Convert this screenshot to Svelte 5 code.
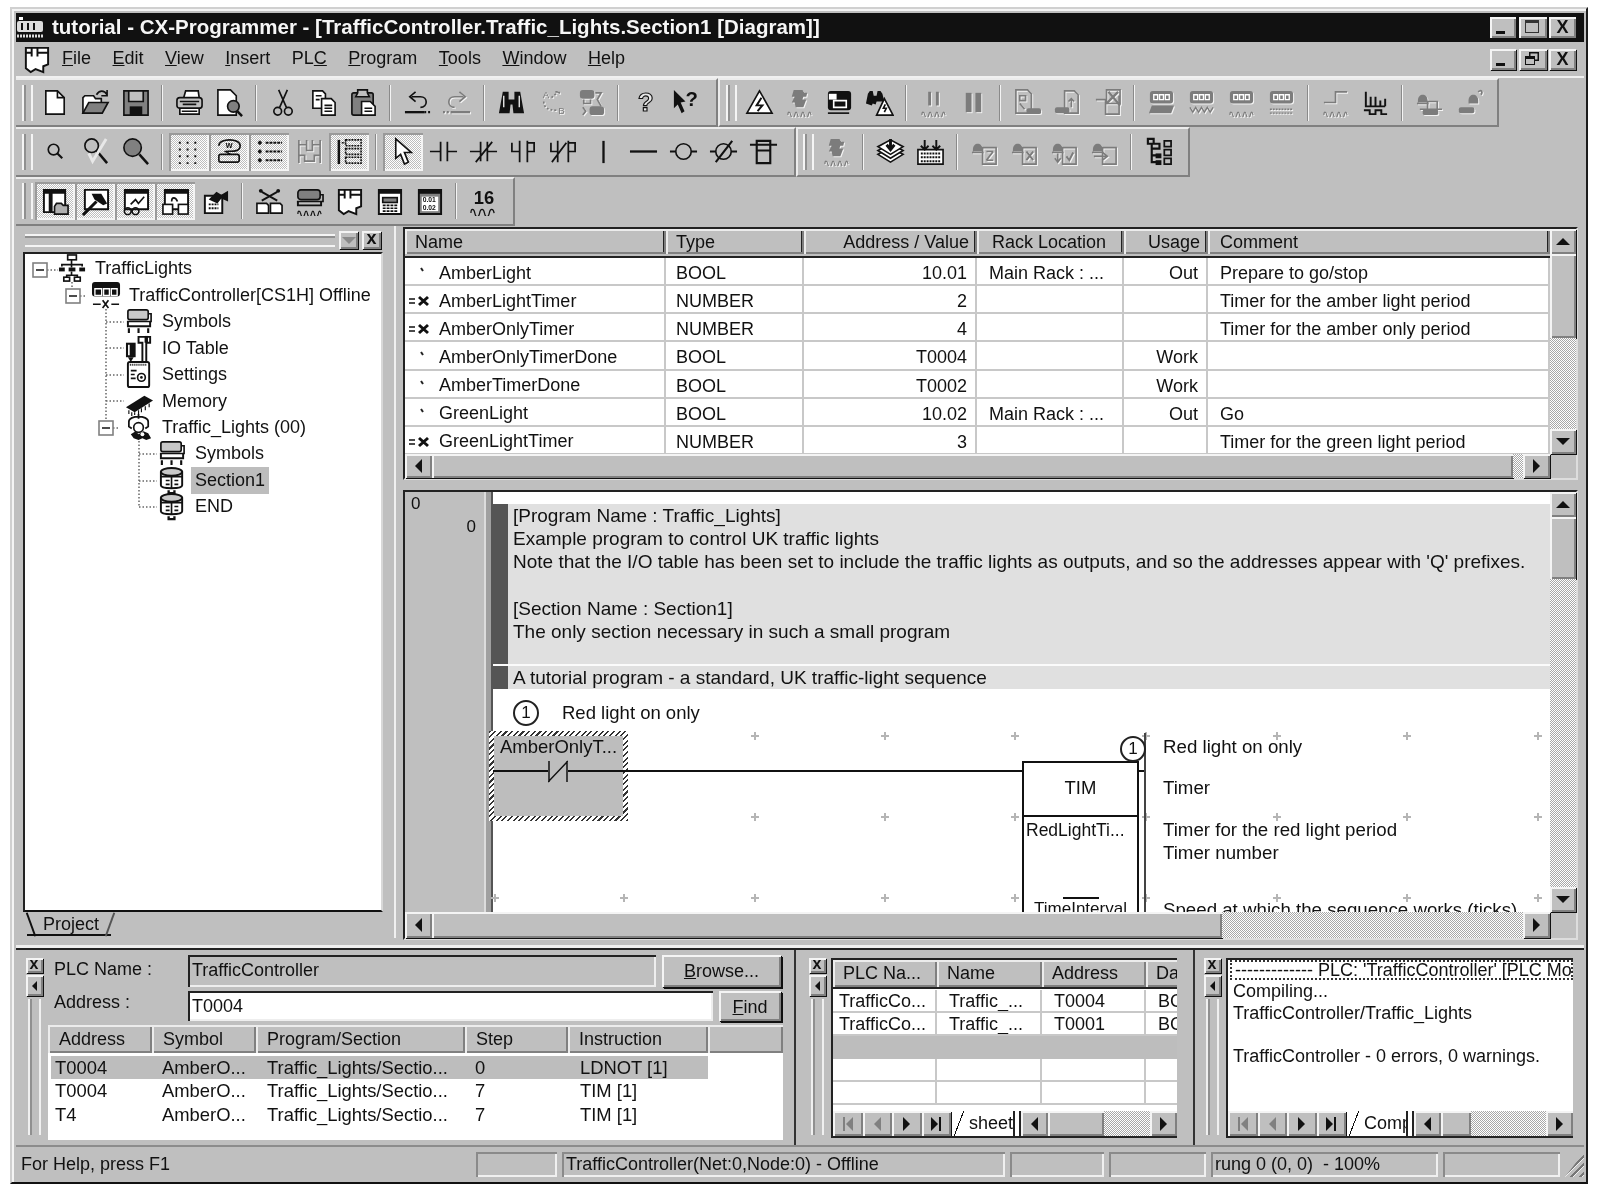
<script>
  // shorthand attributes for the toolbar glyphs
  const W = 'style="fill:var(--w,#fff)"';
  const D = 'fill="currentColor" stroke="none"';
  const G = 'style="fill:var(--g,#808080)"';
  const feet = '<path stroke-width="1.2" d="M3 28c0-4 2-4 3 0s3 4 4 0 2-4 3 0 3 4 4 0 2-4 3 0 3 4 4 0 2-4 3 0"/>';
  const plcTop = `<rect x="3" y="3" width="24" height="13" rx="3" ${D}/><path stroke="#fff" stroke-width="1.4" d="M7 7h4v5H7zM13 7h4v5h-4zM19 7h4v5h-4z"/>`;
  const bell = `<path ${D} d="M3 13c0-8 10-8 10 0v2H3z"/><path d="M2 16h12"/>`;
  const label = (t, x, y, s = 9, w = 700) =>
    `<text x="${x}" y="${y}" font-family="Liberation Sans" font-size="${s}" font-weight="${w}" fill="currentColor" stroke="none">${t}</text>`;

  const icons = {
    new: `<path d="M5 3h12l7 7v17H5z" ${W}/><path d="M17 3v7h7"/>`,
    open: `<path d="M2 26V10l2-2h9l2 3h6v4" ${W}/><path d="M2 26l6-11h20l-6 11z" ${G}/><path d="M16 7c3-5 8-5 11 0M27 2v6h-6"/>`,
    save: `<path d="M3 3h25v25H3z" ${G}/><path d="M8 3h15v11H8z" style="fill:var(--w,#c0c0c0)"/><rect x="9" y="19" width="13" height="9" ${D}/>`,
    print: `<path d="M9 10l2-7h13l1 7" ${W}/><rect x="2" y="10" width="26" height="11" rx="3" style="fill:var(--w,#c0c0c0)"/><path d="M5 21h20v6H5z" ${W}/><path d="M5 14h20M8 17h14M7 24h16"/>`,
    preview: `<path d="M3 2h13l6 6v20H3z" ${W}/><circle cx="19" cy="19" r="6" ${G}/><path stroke-width="2.6" d="M23 24l5 5"/>`,
    cut: `<circle cx="9" cy="24" r="4"/><circle cx="20" cy="24" r="4"/><path d="M11 20L19 2M18 20L10 2"/>`,
    copy: `<path d="M4 3h10l3 3v15H4z" ${W}/><path d="M13 11h10l4 4v13H13z" ${W}/><path d="M7 8h6M7 12h4M16 18h8M16 21h8M16 24h8"/>`,
    paste: `<rect x="3" y="5" width="22" height="23" rx="2" ${G}/><path d="M9 5V2h10v3l2 4H7z" style="fill:var(--w,#c0c0c0)"/><path d="M13 14h9l5 5v9H13z" ${W}/><path d="M16 21h8M16 24h8"/>`,
    undo: `<path d="M9 9h9c8 0 8 11 0 11M13 4L7 9l6 5"/><path stroke-width="2.4" d="M2 25h20"/><path stroke-width="2.4" stroke-dasharray="2 2" d="M22 25h8"/>`,
    redo: `<path d="M21 9h-9c-8 0-8 11 0 11M17 4l6 5-6 5"/><path stroke-width="2.4" d="M8 25h20"/><path stroke-width="2.4" stroke-dasharray="2 2" d="M0 25h8"/>`,
    binoc: `<path ${D} d="M6 4h6v8h6V4h6l4 22H17l-1-9h-2l-1 9H2z"/><path stroke="#fff" stroke-width="1.3" d="M7 8v12M23 8v12"/>`,
    ab: `${label('A', 6, 10, 10, 400)}${label('B', 22, 27, 10, 400)}<path stroke-dasharray="2 2" d="M7 14c0 6 4 9 13 9M15 10l7-6M19 4h4v4"/>`,
    replace: `<rect x="3" y="2" width="15" height="9" rx="3" ${D}/><path d="M7 12v4h7v-4M19 5h6l-4 7 4 7M6 20l3 4-3 4"/><rect x="13" y="19" width="15" height="9" rx="3" ${D}/>`,
    help: `<text x="7" y="24" font-family="Liberation Sans" font-size="27" font-weight="700" fill="#e8e8e8" stroke="currentColor" stroke-width="1.2">?</text>`,
    whats: `<path ${D} d="M3 2l12 12-5 1 4 9-3 2-4-9-4 4z"/>${label('?', 15, 19, 21, 700)}`,
    warn: `<path d="M15 3L2 26h26z" ${W}/><path stroke-width="2" d="M17 10l-5 8h6l-5 6"/>`,
    compile: `<path ${D} d="M9 2h9l2 3h3l-1 4h-3l-1 3h4l-3 8h-8l-1-5H7l3-6H7z"/>${feet}`,
    online: `<rect x="3" y="3" width="24" height="20" rx="3" ${D}/><path d="M9 13h13v7H9z" stroke="#fff"/><rect x="4" y="6" width="8" height="6" fill="#fff" stroke="none"/><path d="M3 26h22"/>`,
    binwarn: `<path ${D} d="M1 16l2-10 2-3h3l1 5h3l1-5h3l2 3 2 8h-8l-1 3-3-1-1 2z"/><path d="M20 11l-8 17h17z" ${W}/><path d="M21 17l-2 4h3l-2 4"/>`,
    pause1: `<path stroke-width="3" d="M11 4v14M19 4v14"/>${feet}`,
    pause: `<rect x="7" y="5" width="6" height="20" ${D}/><rect x="17" y="5" width="6" height="20" ${D}/>`,
    doc1: `<path d="M3 2h12l4 4v20H3z"/><path d="M7 8h6v5H7zM7 16l5 6"/><rect x="14" y="21" width="15" height="6" rx="2" ${D}/>`,
    doc2: `<path d="M12 3h10l4 4v19H12z"/><path d="M19 20v-9M16 14l3-3 3 3"/><rect x="2" y="20" width="15" height="6" rx="2" ${D}/>`,
    doc3: `<path d="M3 12h10v15h14V8"/><path d="M14 2h14v14H14z"/><path stroke-width="2.4" d="M16 4l12 14M26 4L14 16"/>`,
    plc1: `${plcTop}<path ${D} d="M5 18h23l-3 8H2z"/>`,
    plc2: `${plcTop}<path stroke-width="1.4" d="M3 20l3 5 3-5 3 5 3-5 3 5 3-5 3 5 3-5"/>`,
    plc3: `${plcTop}${feet}`,
    plc4: `${plcTop}<path stroke-width="1.4" stroke-dasharray="2 1" d="M3 22h24M3 26h24"/>`,
    step: `<path d="M3 15h12V4h12"/>${feet}`,
    wave: `<path stroke-width="2" d="M5 4v15h20M10 9v10M15 9v10M20 13v6M25 11v8"/><path stroke-width="2" d="M3 23h6v4h6v-4h6v4h6"/>`,
    mem1: `${bell}<path d="M13 14h10v8H13zM5 22h23"/><rect x="8" y="22" width="16" height="6" rx="2" ${D}/>`,
    mem2: `<path ${D} d="M14 13c0-8 10-8 10 0v3H14z"/><path d="M24 4c3-3 5 0 3 3"/><rect x="4" y="20" width="16" height="6" rx="2" ${D}/>`,
    zs: `<circle cx="13" cy="13" r="5.5"/><path stroke-width="2.2" d="M17 17l5 5"/>`,
    zx: `<circle cx="11" cy="9" r="7"/><path stroke-width="2.6" d="M16 14l11 13"/><path stroke="#e8e8e8" stroke-width="3" d="M8 17l4 8 14-23"/>`,
    zl: `<circle cx="12" cy="11" r="9" ${G}/><path stroke-width="2.6" d="M19 18l9 10"/>`,
    dots: `<path stroke-width="2" stroke-dasharray="2 6" d="M4 6h24M4 13h24M4 20h24M4 27h24"/>`,
    bubble: `<path d="M4 9c0-8 22-8 22 0s-12 5-15 6l5 3"/><rect x="4" y="18" width="21" height="8" rx="2"/>${label('w', 11, 11, 9)}`,
    list: `<path stroke-width="2" d="M5 4v4M3 6h4M5 13v4M3 15h4M5 22v4M3 24h4"/><path stroke-dasharray="3 1" stroke-width="2" d="M11 6h17M11 15h17M11 24h17"/>`,
    rungs: `<path d="M4 3v24M26 3v24M4 8h8v6h6V8h8M4 19h6v6h10v-6h6M12 3v5M18 3v5"/>`,
    rungs2: `<path stroke-width="2.6" d="M4 3v25"/><path d="M7 6h4M11 3h16v6H11zM11 12h16v6H11zM11 21h16v6H11z" stroke-dasharray="2 1"/>`,
    arrow: `<path d="M7 2v20l5-4 4 10 4-2-4-10h7z" ${W}/>`,
    no: `<path stroke-width="1.8" d="M1 15h11M12 5v20M19 5v20M19 15h10"/>`,
    nc: `<path stroke-width="1.8" d="M1 15h11M12 5v20M19 5v20M19 15h10M7 26L24 5"/>`,
    po: `<path stroke-width="1.8" d="M3 6v9h8M11 4v22M19 4v22M19 6h7v9h-7"/>`,
    pc: `<path stroke-width="1.8" d="M2 6v9h7M9 4v22M20 4v22M20 6h7v9h-7M3 26L18 6"/>`,
    vline: `<path stroke-width="2.4" d="M15 4v23"/>`,
    hline: `<path stroke-width="2.4" d="M1 15h28"/>`,
    coil: `<circle cx="15" cy="15" r="8"/><path stroke-width="2.2" d="M1 15h6M23 15h6"/>`,
    coiln: `<circle cx="15" cy="15" r="8"/><path stroke-width="2.2" d="M1 15h6M23 15h6M7 26L24 4"/>`,
    inst: `<path stroke-width="2.2" d="M8 4h14v23H8zM8 14h14M1 8h28"/>`,
    stack: `<path ${W} d="M15 11l13 7-13 8-13-8z"/><path ${W} d="M15 7l13 7-13 8-13-8z"/><path ${W} d="M15 3l13 7-13 8-13-8z"/><path stroke-width="3" d="M15 2v9M11 8l4 5 4-5"/>`,
    grid: `<path ${W} d="M2 13h26v15H2z"/><path stroke-dasharray="2 1" stroke-width="2" d="M5 17h20M5 21h20M5 25h20"/><path stroke-width="2" d="M9 3v9M5 9l4 4 4-4M21 3v9M17 9l4 4 4-4"/>`,
    sec1: `${bell}<path d="M13 11h14v17H13z"/><path d="M17 24l7-9M17 15h7M17 24h7"/>`,
    sec2: `${bell}<path d="M13 11h14v17H13z"/><path stroke-width="2" d="M17 15l7 9M24 15l-7 9"/>`,
    sec3: `${bell}<path d="M13 11h14v17H13zM8 17v8M5 22l3 4 3-4"/><path stroke-width="2" d="M17 20l3 4 4-8"/>`,
    sec4: `${bell}<path d="M13 11h14v17H13zM4 20h13M13 16l5 4-5 4"/>`,
    tree: `<path stroke-width="2.2" d="M4 2h6v5H4zM8 7h8v5H8zM8 12v14h8M8 19h8M16 12v-2"/><rect x="12" y="17" width="6" height="5" ${D}/><rect x="12" y="24" width="6" height="5" ${D}/><path stroke-width="1.8" d="M21 4h7v6h-7zM21 13h7v6h-7zM21 22h7v6h-7z"/>`,
    win1: `<path stroke-width="2" d="M3 3h22v23H3z" ${W}/><path stroke-width="4" d="M3 5h22M10 7v19"/><path d="M14 20l2-3h5l2 2h5v9H14z" style="fill:#b0b0b0"/>`,
    hammer: `<path stroke-width="2" d="M4 3h24v20H4z" ${W}/><path stroke-width="3.2" d="M2 29l14-14"/><path ${D} d="M11 7l10 0 6 10-4 2-9-6z"/>`,
    chart: `<path stroke-width="2" d="M4 3h24v20H4z" ${W}/><path stroke-width="4" d="M4 5h24"/><path d="M10 18l5-5 3 4 6-7"/><circle cx="7" cy="25" r="3.5"/><circle cx="15" cy="25" r="3.5"/>`,
    flow: `<path stroke-width="2" d="M4 3h24v20H4z" ${W}/><path stroke-width="4" d="M4 5h24"/><path d="M11 15c0-5 4-5 6 0"/><rect x="2" y="18" width="10" height="10" ${W}/><rect x="18" y="18" width="10" height="10" ${W}/>`,
    form: `<path stroke-width="2" d="M4 9h18v18H4z" ${W}/><path stroke-dasharray="2 1" stroke-width="2" d="M8 18h10M8 22h10"/><path ${D} d="M8 13l8-8 5 3 7-4v11l-7-3-4 5z"/>`,
    cross: `<path ${W} d="M2 17h10l2 2v8H2z"/><path ${W} d="M16 17h10l2 2v8H16z"/><path stroke-width="2" d="M7 5l16 9M23 5L7 14"/><circle cx="6" cy="4" r="2" ${D}/><circle cx="24" cy="4" r="2" ${D}/>`,
    syms: `<rect x="3" y="3" width="23" height="10" rx="3" ${G}/><path d="M26 8h3v7H2M16 15h-2"/><path stroke-width="2" d="M3 15v4h24v-4"/>${feet}`,
    cx: `<path stroke-width="2" d="M4 3h23v17l-5 2v6l-8-3-5 3-5-4z" ${W}/><path stroke-width="2" d="M10 3v9M10 8H4M16 3v9M16 8h11"/>`,
    form2: `<path stroke-width="2" d="M4 3h23v25H4z" ${W}/><path stroke-width="4" d="M4 5h23"/><rect x="8" y="11" width="15" height="5" ${G}/><path stroke-dasharray="3 1" d="M8 19h15M8 22h15M8 25h15"/>`,
    table: `<path stroke-width="2" d="M4 3h23v25H4z" ${G}/><path stroke-width="4" d="M4 5h23"/><rect x="7" y="10" width="17" height="15" fill="#fff" stroke="none"/>${label('0.01', 8, 16, 7)}${label('0.02', 8, 24, 7)}`,
    sixteen: `${label('16', 5, 18, 19)}<path stroke-width="1.3" d="M2 27c0-5 3-5 4 0s4 5 5 0 4-5 5 0 4 5 5 0 4-5 5 0"/>`,
    // tree glyphs
    net: `<rect x="10" y="1" width="9" height="5" ${W}/><path d="M14 6v5M4 13v-2h21v2M14 11v3"/><rect x="1" y="14" width="6" height="4" ${D}/><rect x="11" y="14" width="7" height="4" ${D}/><rect x="22" y="14" width="6" height="4" ${D}/><path d="M14 18v4M9 24v-2h11v2"/><rect x="6" y="24" width="6" height="4" ${W}/><rect x="17" y="24" width="6" height="4" ${W}/>`,
    plc: `<rect x="0" y="1" width="29" height="15" rx="3" ${D}/><path stroke="#fff" stroke-width="1.4" d="M3 8h7v7H3zM12 8h6v7h-6zM20 8h6v7h-6z"/><path d="M1 24h8M20 24h8M11 20l6 8M17 20l-6 8"/>`,
    syms2: `<rect x="3" y="3" width="21" height="10" rx="2" fill="#c8c8c8"/><path d="M24 7h3v8H2M12 15h-1"/><path stroke-width="2" d="M3 15v5h23v-5"/><path stroke-width="2.2" d="M4 22v5M14 22v5M24 22v5"/>`,
    io: `<rect x="1" y="9" width="10" height="15" ${D}/><path stroke="#fff" d="M4 11v11"/><path ${D} d="M3 24h6l-3 5z"/><path stroke-width="2" d="M14 3h12v6h-4v20h-4V9h-4z" ${W}/><path stroke-width="3.5" d="M22 2v7"/>`,
    cfg: `<rect x="3" y="2" width="22" height="26" rx="2" stroke-width="2" ${W}/><path stroke-dasharray="1 1" stroke-width="2" d="M5 5h18"/><path d="M6 11h6M6 15h4M6 19h5"/><circle cx="17" cy="18" r="4"/><circle cx="17" cy="18" r="1.4" ${D}/>`,
    mem: `<path ${D} d="M1 21L20 9l9 5-19 12z"/><path stroke-width="1.2" d="M4 24v4M7 26v4M10 26v3M14 24v4M17 22v4M21 20v4M25 17v4"/>`,
    prog: `<path stroke-width="1.8" d="M4 9c0-7 20-7 20 0M4 9v5l3 2M24 9v5l-3 2M14 1v5"/><circle cx="14" cy="15" r="5"/><path ${D} d="M6 22l5-3 3 3 5-3 5 2 3 5-5 2-4-2-4 2-5-2z"/><circle cx="18" cy="22" r="2" fill="#fff" stroke="none"/>`,
    sect: `<ellipse cx="14" cy="6" rx="11" ry="4" stroke-width="2" fill="#c8c8c8"/><path stroke-width="2" d="M3 6v14c0 4 22 4 22 0V6"/><path d="M3 11h22M14 11v12M8 15h4M17 15h4M8 19h4M17 19h4"/><path stroke-width="2.4" d="M11 25v3h6v-3"/>`
  };

  // toolbar layouts: | = separator, ~ = disabled, ! = latched down
  const bars = [
    [
      ['new open save | print preview | cut copy paste | undo ~redo | binoc ~ab ~replace | help whats', 'w1'],
      ['warn ~compile online binwarn | ~pause1 ~pause | ~doc1 ~doc2 ~doc3 | ~plc1 ~plc2 ~plc3 ~plc4 | ~step wave | ~mem1 ~mem2', 'w2']
    ],
    [
      ['zs zx zl | !dots !bubble !list ~rungs !rungs2 | !arrow no nc po pc vline hline coil coiln inst', 'w3'],
      ['~compile | stack grid | ~sec1 ~sec2 ~sec3 ~sec4 | tree', 'w4']
    ],
    [['!win1 !hammer !chart !flow form | cross syms cx form2 table | sixteen', 'w5']]
  ];

  const parse = (s) =>
    s.split(' ').map((t) => ({
      sep: t === '|',
      off: t[0] === '~',
      on: t[0] === '!',
      name: t.replace(/[~!]/, '')
    }));

  const menus = [['F', 'ile'], ['E', 'dit'], ['V', 'iew'], ['I', 'nsert'], ['PL', 'C', 1], ['P', 'rogram'], ['T', 'ools'], ['W', 'indow'], ['H', 'elp']];

  const tree = [
    [0, 'net', 'TrafficLights'],
    [1, 'plc', 'TrafficController[CS1H] Offline'],
    [2, 'syms2', 'Symbols'],
    [2, 'io', 'IO Table'],
    [2, 'cfg', 'Settings'],
    [2, 'mem', 'Memory'],
    [2, 'prog', 'Traffic_Lights (00)'],
    [3, 'syms2', 'Symbols'],
    [3, 'sect', 'Section1', true],
    [3, 'sect', 'END']
  ];
  const indent = [33, 67, 100, 133];

  const symbols = [
    ['b', 'AmberLight', 'BOOL', '10.01', 'Main Rack : ...', 'Out', 'Prepare to go/stop'],
    ['n', 'AmberLightTimer', 'NUMBER', '2', '', '', 'Timer for the amber light period'],
    ['n', 'AmberOnlyTimer', 'NUMBER', '4', '', '', 'Timer for the amber only period'],
    ['b', 'AmberOnlyTimerDone', 'BOOL', 'T0004', '', 'Work', ''],
    ['b', 'AmberTimerDone', 'BOOL', 'T0002', '', 'Work', ''],
    ['b', 'GreenLight', 'BOOL', '10.02', 'Main Rack : ...', 'Out', 'Go'],
    ['n', 'GreenLightTimer', 'NUMBER', '3', '', '', 'Timer for the green light period']
  ];

  const notes = [
    '[Program Name : Traffic_Lights]',
    'Example program to control UK traffic lights',
    "Note that the I/O table has been set to include the traffic lights as outputs, and so the addresses appear with 'Q' prefixes.",
    '',
    '[Section Name : Section1]',
    'The only section necessary in such a small program'
  ];

  // diagram coordinates, relative to the rung canvas
  const OX = 493, OY = 689;
  const marks = [];
  for (const y of [736, 817, 898]) {
    for (const x of [755, 885, 1015, 1146, 1277, 1407, 1538]) marks.push([x - OX, y - OY]);
  }
  marks.push([2, 898 - OY], [624 - OX, 898 - OY]);

  const notesRight = [
    ['Red light on only', 747],
    ['Timer', 788],
    ['Timer for the red light period', 830],
    ['Timer number', 853],
    ['Speed at which the sequence works (ticks)', 910]
  ];

  const finds = [
    ['T0004', 'AmberO...', 'Traffic_Lights/Sectio...', '0', 'LDNOT [1]'],
    ['T0004', 'AmberO...', 'Traffic_Lights/Sectio...', '7', 'TIM [1]'],
    ['T4', 'AmberO...', 'Traffic_Lights/Sectio...', '7', 'TIM [1]']
  ];
  const watch = [
    ['TrafficCo...', 'Traffic_...', 'T0004', 'BC'],
    ['TrafficCo...', 'Traffic_...', 'T0001', 'BC'],
    ['', '', '', ''],
    ['', '', '', ''],
    ['', '', '', '']
  ];
</script>

{#snippet glyph(name, cls = '')}
  <svg class="ic {cls}" viewBox="0 0 30 30" fill="none" stroke="currentColor" stroke-width="1.7">{@html icons[name]}</svg>
{/snippet}

{#snippet dock()}
  <div class="dock">
    <div class="dockx raised">x</div>
    <div class="dockl raised"><i class="arr l"></i></div>
    <div class="dockgrip"></div>
  </div>
{/snippet}

{#snippet sheetbar(tab, tabW, thumbW)}
  <div class="sheetbar">
    <div class="nav">
      <div class="navb raised off"><b class="stop"></b><i class="arr l"></i></div>
      <div class="navb raised off"><i class="arr l"></i></div>
      <div class="navb raised"><i class="arr r"></i></div>
      <div class="navb raised"><i class="arr r"></i><b class="stop"></b></div>
    </div>
    <div class="tab" style="width:{tabW}px">{tab}</div>
    <div class="hscroll">
      <div class="sb raised"><i class="arr l"></i></div>
      <div class="thumb raised" style="width:{thumbW}px"></div>
      <div class="dither"></div>
      <div class="sb raised"><i class="arr r"></i></div>
    </div>
  </div>
{/snippet}

<div class="win">
  <div class="title">
    <svg class="ticon" viewBox="0 0 30 26">
      <rect x="3" y="2" width="4" height="3" fill="#fff" />
      <rect x="1" y="6" width="26" height="11" rx="2" fill="#ddd" />
      <path d="M6 8v7M12 8v7M18 8v7" stroke="#111" stroke-width="2" />
      <path d="M1 21h27" stroke="#ddd" stroke-width="3" stroke-dasharray="2 1" />
    </svg>
    <span class="ttext">tutorial - CX-Programmer - [TrafficController.Traffic_Lights.Section1 [Diagram]]</span>
    <div class="capbtns">
      <div class="cap raised"><b class="u"></b></div>
      <div class="cap raised mid"><b class="m"></b></div>
      <div class="cap raised x">X</div>
    </div>
  </div>

  <div class="menu">
    <div class="mlogo">{@render glyph('cx')}</div>
    {#each menus as [a, b, flip]}
      <span class="mi">{#if flip}{a}<u>{b}</u>{:else}<u>{a}</u>{b}{/if}</span>
    {/each}
    <div class="capbtns">
      <div class="cap raised"><b class="u"></b></div>
      <div class="cap raised mid"><b class="r"></b></div>
      <div class="cap raised x">X</div>
    </div>
  </div>

  <div class="bars">
    {#each bars as row}
      <div class="barrow">
        {#each row as [spec, width]}
          <div class="band {width}">
            <div class="grip"></div>
            {#each parse(spec) as t}
              {#if t.sep}
                <div class="bsep"></div>
              {:else}
                <div class="tb" class:on={t.on}>{@render glyph(t.name, t.off ? 'off' : '')}</div>
              {/if}
            {/each}
          </div>
        {/each}
      </div>
    {/each}
  </div>

  <div class="work">
    <div class="left">
      <div class="lhead">
        <div class="lgrip"></div>
        <div class="lbtn raised"><i class="arr d pale"></i></div>
        <div class="lbtn raised bx">x</div>
      </div>
      <div class="treebox">
        <svg class="links" viewBox="0 0 356 300" width="356" height="300">
          <path d="M22 16h11M47 28v7M55 42h7M81 55v113M81 68h18M81 94h18M81 121h18M81 147h18M88 174h7M114 187v66M114 200h18M114 227h18M114 253h18" fill="none" stroke="#666" stroke-width="1.5" stroke-dasharray="1.5 2" />
          {#each [[15, 16], [48, 42], [81, 174]] as [x, y]}
            <rect x={x - 7} y={y - 7} width="14" height="14" fill="#fff" stroke="#808080" stroke-width="1.6" />
            <path d="M{x - 4} {y}h8" stroke="#111" stroke-width="1.5" />
          {/each}
        </svg>
        {#each tree as [depth, icon, text, sel]}
          <div class="tnode" style="margin-left:{indent[depth]}px">
            {@render glyph(icon)}
            <span class="tlabel" class:sel>{text}</span>
          </div>
        {/each}
      </div>
      <div class="ltabs">
        <div class="ptab">Project</div>
      </div>
    </div>

    <div class="vsplit"></div>

    <div class="right">
      <div class="sym">
        <div class="symbody">
          <div class="cols head">
            <div>Name</div>
            <div>Type</div>
            <div class="ra">Address / Value</div>
            <div class="rack">Rack Location</div>
            <div class="ra">Usage</div>
            <div class="cmt">Comment</div>
          </div>
          {#each symbols as row}
            <div class="cols srow">
              <div class="sname">
                <span class="kind">
                  {#if row[0] === 'n'}
                    <svg width="25" height="12" viewBox="0 0 25 12"><path d="M1 4h6M1 8h6" stroke="#111" stroke-width="1.6" /><path d="M11 2l9 8M20 2l-9 8" stroke="#111" stroke-width="3" /></svg>
                  {:else}
                    <svg width="25" height="12" viewBox="0 0 25 12"><path d="M13 1l2 3" stroke="#222" stroke-width="2" /></svg>
                  {/if}
                </span>{row[1]}
              </div>
              <div>{row[2]}</div>
              <div class="ra">{row[3]}</div>
              <div class="rackv">{row[4]}</div>
              <div class="ra">{row[5]}</div>
              <div class="cmt">{row[6]}</div>
            </div>
          {/each}
        </div>
        <div class="vscroll">
          <div class="sbv raised"><i class="arr u"></i></div>
          <div class="thumbv raised t1"></div>
          <div class="dither"></div>
          <div class="sbv raised"><i class="arr d"></i></div>
        </div>
        <div class="hscroll">
          <div class="sb raised"><i class="arr l"></i></div>
          <div class="thumb raised wide1"></div>
          <div class="dither"></div>
          <div class="sb raised"><i class="arr r"></i></div>
        </div>
        <div></div>
      </div>

      <div class="prog">
        <div class="canvas">
          <div class="rail">
            <span class="step0">0</span>
            <span class="step1">0</span>
          </div>
          <div class="stripe"></div>
          <div class="sheet">
            <div class="note">
              <div class="notebar"></div>
              <div class="notetext">
                {#each notes as n}
                  <div class="nline">{n}</div>
                {/each}
              </div>
            </div>
            <div class="note last">
              <div class="notebar"></div>
              <div class="notetext"><div class="nline">A tutorial program - a standard, UK traffic-light sequence</div></div>
            </div>
            <div class="rung">
              {#each marks as [x, y]}
                <span class="mark" style="left:{x - 4}px;top:{y - 4}px"></span>
              {/each}
              <div class="no n1">1</div>
              <div class="rcomment">Red light on only</div>

              <div class="cell">
                <div class="celltext">AmberOnlyT...</div>
              </div>
              <div class="wire"></div>
              <svg class="contact" width="20" height="23" viewBox="0 0 20 23">
                <path d="M1 1v21M19 1v21M0 22L20 1" stroke="#111" stroke-width="1.5" fill="none" />
              </svg>
              <div class="timbox">
                <div class="timname">TIM</div>
                <div class="timarg">RedLightTi...</div>
                <div class="timbar"></div>
                <div class="timarg2">TimeInterval</div>
              </div>
              <div class="bus"></div>
              <div class="stub"></div>
              <div class="no n2">1</div>
              {#each notesRight as [t, y]}
                <div class="anno" style="top:{y - OY - 12}px">{t}</div>
              {/each}
            </div>
          </div>
        </div>
        <div class="vscroll">
          <div class="sbv raised"><i class="arr u"></i></div>
          <div class="thumbv raised t2"></div>
          <div class="dither"></div>
          <div class="sbv raised"><i class="arr d"></i></div>
        </div>
        <div class="hscroll">
          <div class="sb raised"><i class="arr l"></i></div>
          <div class="thumb raised wide2"></div>
          <div class="dither"></div>
          <div class="sb raised"><i class="arr r"></i></div>
        </div>
        <div></div>
      </div>
    </div>
  </div>

  <div class="bottom">
    <section class="p1">
      {@render dock()}
      <div class="findpane">
        <div class="frow">
          <label class="flabel" for="plc">PLC Name :</label>
          <div id="plc" class="field ro">TrafficController</div>
          <div class="btn browse"><u>B</u>rowse...</div>
        </div>
        <div class="frow second">
          <label class="flabel" for="addr">Address :</label>
          <div id="addr" class="field">T0004</div>
          <div class="btn find"><u>F</u>ind</div>
        </div>
        <div class="fhead">
          <div>Address</div><div>Symbol</div><div>Program/Section</div><div>Step</div><div>Instruction</div><div></div>
        </div>
        <div class="flist">
          {#each finds as row, i}
            <div class="fitem" class:sel={i === 0}>
              {#each row as c}<div>{c}</div>{/each}
            </div>
          {/each}
        </div>
      </div>
    </section>

    <section class="p2">
      {@render dock()}
      <div class="watch">
        <div class="whead">
          <div>PLC Na...</div><div>Name</div><div>Address</div><div>Da</div>
        </div>
        <div class="wbody">
          {#each watch as row, i}
            <div class="witem" class:sel={i === 2}>
              {#each row as c}<div>{c}</div>{/each}
            </div>
          {/each}
        </div>
        {@render sheetbar('sheet1', 62, 56)}
      </div>
    </section>

    <section class="p3">
      {@render dock()}
      <div class="output">
        <div class="otext">
          <div class="ofirst">------------- PLC: 'TrafficController' [PLC Mode]</div>
          <div class="oline">Compiling...</div>
          <div class="oline">TrafficController/Traffic_Lights</div>
          <div class="oline">&nbsp;</div>
          <div class="oline">TrafficController - 0 errors, 0 warnings.</div>
        </div>
        {@render sheetbar('Compile', 60, 30)}
      </div>
    </section>
  </div>

  <div class="status">
    <div class="shelp">For Help, press F1</div>
    <div class="cell1 s1"></div>
    <div class="cell1 s2">TrafficController(Net:0,Node:0) - Offline</div>
    <div class="cell1 s3"></div>
    <div class="cell1 s4"></div>
    <div class="cell1 s5">rung 0 (0, 0) &nbsp;- 100%</div>
    <div class="cell1 s6"></div>
    <div class="sgrip"></div>
  </div>
</div>

<style>
  :global(body) {
    margin: 0;
    background: #fff;
  }
  .win {
    box-sizing: border-box;
    margin: 7px 0 0 10px;
    width: 1578px;
    height: 1177px;
    padding: 4px 2px 2px 4px;
    background: #bfbfbf;
    border: 2px solid;
    border-color: #d0d0d0 #1c1c1c #111 #d0d0d0;
    box-shadow: inset 2px 2px #f4f4f4;
    display: flex;
    flex-direction: column;
    font: 18px/1.2 "Liberation Sans", Arial, sans-serif;
    color: #111;
    filter: blur(0.45px);
    overflow: hidden;
    white-space: nowrap;
  }
  .raised {
    background: #bfbfbf;
    box-shadow: inset 2px 2px #f4f4f4, inset -2px -2px #808080, 1px 1px #111;
  }

  /* title and menu */
  .title {
    height: 29px;
    flex: none;
    background: #111;
    display: flex;
    align-items: center;
    color: #f6f6f6;
    font-weight: 700;
    font-size: 20.5px;
  }
  .ticon {
    width: 30px;
    height: 26px;
    margin: 0 6px 0 0;
  }
  .capbtns {
    margin-left: auto;
    display: flex;
    gap: 2.5px;
    padding-right: 8px;
  }
  .cap {
    width: 26px;
    height: 21px;
    color: #111;
    position: relative;
    font: 700 18px/21px "Liberation Sans", sans-serif;
    text-align: center;
  }
  .cap.mid {
    width: 28px;
  }
  .cap.x {
    width: 27px;
  }
  .cap b {
    position: absolute;
    display: block;
  }
  .cap .u {
    left: 6px;
    bottom: 4px;
    width: 9px;
    height: 3px;
    background: #111;
  }
  .cap .m {
    left: 6px;
    top: 3px;
    width: 14px;
    height: 13px;
    border: 1.5px solid #333;
    border-top-width: 3px;
    box-sizing: border-box;
  }
  .cap .r {
    left: 6px;
    top: 7px;
    width: 10px;
    height: 9px;
    border: 1.5px solid #111;
    border-top-width: 3px;
    box-sizing: border-box;
    box-shadow: 4px -4px 0 -1.5px #bfbfbf, 4px -4px 0 0 #111;
  }
  .menu {
    height: 34px;
    flex: none;
    display: flex;
    align-items: center;
    position: relative;
  }
  .mlogo {
    width: 46px;
    padding-left: 6px;
    box-sizing: border-box;
    display: flex;
  }
  .mi {
    margin-right: 21.5px;
  }

  /* toolbars */
  .bars {
    flex: none;
    height: 150px;
    border-top: 2px solid #f0f0f0;
    box-sizing: border-box;
  }
  .barrow {
    height: 49.3px;
    display: flex;
  }
  .band {
    box-sizing: border-box;
    display: flex;
    align-items: center;
    height: 100%;
    border-top: 2px solid #ececec;
    border-bottom: 2px solid #808080;
    border-right: 2px solid #808080;
    padding-left: 6px;
  }
  .band + .band {
    border-left: 2px solid #ececec;
  }
  .w1 { width: 702px; }
  .w2 { width: 781px; padding-left: 6px; }
  .w3 { width: 780px; }
  .w4 { width: 394px; padding-left: 5px; }
  .w5 { width: 499px; }
  .grip {
    box-sizing: border-box;
    width: 11px;
    height: 36px;
    margin-right: 2px;
    flex: none;
    border-left: 2px solid #f4f4f4;
    border-right: 2px solid #f4f4f4;
    box-shadow: inset 2px 0 #909090;
  }
  .tb {
    width: 40px;
    height: 38px;
    flex: none;
    display: flex;
    align-items: center;
    justify-content: center;
    box-sizing: border-box;
  }
  .tb.on {
    background: repeating-conic-gradient(#fff 0 25%, #bdbdbd 0 50%) 0 0 / 2px 2px;
    box-shadow: inset 2px 2px #9a9a9a, inset -2px -2px #f4f4f4;
  }
  .bsep {
    width: 2px;
    height: 36px;
    margin: 0 6px;
    flex: none;
    background: linear-gradient(90deg, #8a8a8a 50%, #f4f4f4 50%);
  }
  .ic {
    width: 29px;
    height: 29px;
    flex: none;
    color: #111;
  }
  .ic.off {
    color: #7c7c7c;
    --w: transparent;
    --g: #7c7c7c;
    filter: drop-shadow(1px 1px 0 #f4f4f4);
  }

  /* workspace */
  .work {
    height: 722px;
    flex: none;
    display: flex;
  }
  .left {
    width: 360px;
    margin-left: 7px;
    display: flex;
    flex-direction: column;
    flex: none;
  }
  .lhead {
    height: 26px;
    display: flex;
    align-items: center;
    gap: 4px;
    padding-left: 2px;
    box-sizing: border-box;
    padding-top: 2px;
  }
  .lgrip {
    width: 310px;
    height: 9px;
    border-top: 2px solid #f4f4f4;
    border-bottom: 2px solid #f4f4f4;
    box-shadow: inset 0 2px #909090;
  }
  .lbtn {
    width: 19px;
    height: 18px;
    position: relative;
    text-align: center;
  }
  .lbtn.bx {
    font: 700 18px/15px "Liberation Sans", sans-serif;
  }
  .treebox {
    box-sizing: border-box;
    height: 660px;
    position: relative;
    background: #fff;
    border: 2px solid;
    border-color: #222 #d8d8d8 #111 #222;
    padding-top: 1.6px;
  }
  .links {
    position: absolute;
    left: 0;
    top: 0;
  }
  .tnode {
    height: 26.44px;
    display: flex;
    align-items: center;
    position: relative;
  }
  .tlabel {
    margin-left: 4px;
    padding: 0 4px;
    line-height: 27px;
  }
  .tlabel.sel {
    background: #bdbdbd;
  }
  .ltabs {
    height: 26px;
    padding-left: 4px;
  }
  .ptab {
    width: 84px;
    height: 24px;
    line-height: 24px;
    padding-left: 16px;
    box-sizing: border-box;
    background: #bfbfbf;
    border-bottom: 2px solid #111;
    position: relative;
  }
  .ptab::before,
  .ptab::after {
    content: "";
    position: absolute;
    top: 0;
    width: 2px;
    height: 25px;
    background: #111;
  }
  .ptab::before {
    left: 3px;
    transform: rotate(-20deg);
  }
  .ptab::after {
    right: 0;
    transform: rotate(20deg);
    background: #555;
  }
  .vsplit {
    width: 7px;
    margin: 0 0 10px 11px;
    border-left: 2px solid #f0f0f0;
    flex: none;
  }
  .right {
    width: 1175px;
    flex: none;
    padding-top: 1px;
  }
  .sym,
  .prog {
    box-sizing: border-box;
    display: grid;
    grid-template-columns: 1145px 26px;
    border-top: 2px solid #222;
    border-left: 2px solid #222;
    border-right: 2px solid #ddd;
    border-bottom: 2px solid #ddd;
  }
  .sym {
    height: 253px;
    grid-template-rows: 225px 24px;
  }
  .symbody {
    background: #fff;
    overflow: hidden;
  }
  .cols {
    display: grid;
    grid-template-columns: 261px 138px 173px 147px 84px 342px;
  }
  .head {
    height: 29px;
    background: linear-gradient(#bfbfbf 27px, #222 27px);
    align-items: start;
  }
  .head > div {
    height: 25px;
    line-height: 26px;
    padding: 0 10px;
    box-shadow: inset 2px 2px #ececec, inset -2px -2px #808080, inset -3px 0 #222;
  }
  .srow {
    box-sizing: border-box;
    height: 28.15px;
    line-height: 23px;
    border-bottom: 2px solid #c8c8c8;
    grid-template-rows: 26.15px;
  }
  .srow > div {
    padding: 4px 10px 0;
    border-right: 2px solid #c8c8c8;
    overflow: hidden;
  }
  .srow > .sname {
    padding: 4px 0 0 3px;
    display: flex;
    align-items: center;
    border-right: 2px solid #c8c8c8;
  }
  .cols > .ra {
    padding-right: 8px;
  }
  .head > .rack {
    padding-left: 15px;
  }
  .srow > .rackv {
    padding-left: 12px;
  }
  .cols > .cmt {
    padding-left: 12px;
  }
  .kind {
    width: 31px;
    display: flex;
    flex: none;
  }
  .ra {
    text-align: right;
  }
  .vscroll {
    display: flex;
    flex-direction: column;
    grid-row: 1;
    grid-column: 2;
    min-height: 0;
  }
  .hscroll {
    display: flex;
    min-width: 0;
    flex: 1;
  }
  .sbv {
    height: 25px;
    flex: none;
    display: flex;
    align-items: center;
    justify-content: center;
  }
  .thumbv.t1 {
    height: 84px;
    flex: none;
  }
  .thumbv.t2 {
    height: 62px;
    flex: none;
  }
  .sb {
    width: 27px;
    flex: none;
    display: flex;
    align-items: center;
    justify-content: center;
  }
  .thumb {
    flex: none;
  }
  .thumb.wide1 {
    width: 1081px;
  }
  .thumb.wide2 {
    width: 790px;
  }
  .dither {
    flex: 1;
    background: repeating-conic-gradient(#fff 0 25%, #a8a8a8 0 50%) 0 0 / 2px 2px;
  }
  .arr {
    width: 0;
    height: 0;
    display: block;
    border: 5px solid transparent;
  }
  .arr.u { border-bottom: 7px solid #111; border-top: 0; border-width: 0 7px 7px; }
  .arr.d { border-top: 7px solid #111; border-width: 7px 7px 0; }
  .arr.l { border-right: 7px solid #111; border-width: 7px 7px 7px 0; }
  .arr.r { border-left: 7px solid #111; border-width: 7px 0 7px 7px; }
  .arr.pale {
    position: absolute;
    left: 3px;
    top: 6px;
    border-top-color: #8a8a8a;
  }

  /* program pane */
  .prog {
    margin-top: 10px;
    height: 450px;
    grid-template-rows: 420px 26px;
  }
  .canvas {
    display: flex;
    background: #fff;
    overflow: hidden;
    min-height: 0;
  }
  .rail {
    width: 79px;
    flex: none;
    background: #bfbfbf;
    position: relative;
  }
  .step0 {
    position: absolute;
    left: 6px;
    top: 2px;
    font-size: 17px;
  }
  .step1 {
    position: absolute;
    right: 8px;
    top: 25px;
    font-size: 17px;
  }
  .stripe {
    width: 9px;
    flex: none;
    background: #a0a0a0;
    border-left: 2px solid #dcdcdc;
    box-sizing: border-box;
    border-right: 2px solid #555;
  }
  .sheet {
    flex: 1;
    padding-top: 12px;
    min-width: 0;
    font-size: 18.5px;
  }
  .note {
    display: flex;
    height: 162px;
    background: #e0e0e0;
    border-bottom: 2px solid #fbfbfb;
    box-sizing: border-box;
  }
  .note.last {
    height: 23px;
    border: 0;
  }
  .notebar {
    width: 15px;
    flex: none;
    background: #555;
  }
  .notetext {
    padding: 0 0 0 5px;
    font-size: 19px;
  }
  .nline {
    height: 23.2px;
    line-height: 23px;
  }
  .rung {
    position: relative;
    height: 229px;
  }
  .mark {
    position: absolute;
    width: 8px;
    height: 8px;
    background:
      linear-gradient(#b5b5b5, #b5b5b5) center / 2px 8px no-repeat,
      linear-gradient(#b5b5b5, #b5b5b5) center / 8px 2px no-repeat;
  }
  .no {
    position: absolute;
    width: 22px;
    height: 22px;
    border: 2px solid #222;
    border-radius: 50%;
    line-height: 22px;
    text-align: center;
    font-size: 17px;
    background: #fff;
  }
  .n1 { left: 20px; top: 11px; }
  .n2 { left: 627px; top: 47px; }
  .rcomment {
    position: absolute;
    left: 69px;
    top: 13px;
  }
  .cell {
    position: absolute;
    left: -4px;
    top: 42px;
    width: 139px;
    height: 90px;
    box-sizing: border-box;
    border: 5px solid;
    border-image: repeating-linear-gradient(135deg, #333 0 1.5px, #fff 1.5px 4px) 5;
    background: #bdbdbd;
    background-clip: padding-box;
  }
  .celltext {
    font-size: 18.5px;
    text-align: center;
    line-height: 22px;
  }
  .wire {
    position: absolute;
    left: 0;
    top: 81px;
    width: 529px;
    height: 2px;
    background: #111;
  }
  .contact {
    position: absolute;
    left: 55px;
    top: 71px;
    background: #bdbdbd;
  }
  .timbox {
    position: absolute;
    left: 529px;
    top: 72px;
    width: 117px;
    height: 170px;
    box-sizing: border-box;
    border: 2px solid #111;
    background: #fff;
    text-align: center;
  }
  .timname {
    height: 52px;
    line-height: 50px;
    border-bottom: 2px solid #111;
  }
  .timarg {
    text-align: left;
    padding-left: 2px;
    line-height: 26px;
    font-size: 17.5px;
  }
  .timbar {
    width: 36px;
    height: 2px;
    margin: 54px auto 0;
    background: #111;
  }
  .timarg2 {
    font-size: 17px;
    line-height: 20px;
  }
  .bus {
    position: absolute;
    left: 651px;
    top: 44px;
    width: 2px;
    height: 190px;
    background: #444;
  }
  .stub {
    position: absolute;
    left: 646px;
    top: 81px;
    width: 5px;
    height: 2px;
    background: #111;
  }
  .anno {
    position: absolute;
    left: 670px;
    font-size: 18.7px;
    line-height: 24px;
  }

  /* bottom docks */
  .bottom {
    height: 199px;
    flex: none;
    box-sizing: border-box;
    display: grid;
    grid-template-columns: 780px 399px 1fr;
    border-top: 2px solid #222;
    box-shadow: 0 -3px 0 #efefef;
    border-bottom: 2px solid #8c8c8c;
  }
  .bottom section {
    display: flex;
    min-width: 0;
    box-sizing: border-box;
    border-right: 2px solid #333;
    height: 195px;
    padding: 5px 0 0 9px;
  }
  .bottom .p2 {
    padding-left: 12px;
  }
  .bottom .p3 {
    padding-left: 8px;
    border-right: 0;
  }
  .dock {
    width: 18px;
    flex: none;
    margin-right: 5px;
    padding-top: 3px;
    display: flex;
    flex-direction: column;
    align-items: center;
  }
  .dockx {
    width: 17px;
    height: 15px;
    font: 700 16px/11px "Liberation Sans", sans-serif;
    text-align: center;
  }
  .dockl {
    width: 17px;
    height: 21px;
    margin-top: 2px;
    display: flex;
    align-items: center;
    justify-content: center;
  }
  .dockl .arr {
    border-width: 5px 5px 5px 0;
  }
  .dockgrip {
    width: 9px;
    height: 136px;
    margin-top: 3px;
    border-left: 2px solid #f0f0f0;
    border-right: 2px solid #f0f0f0;
    box-shadow: inset 2px 0 #909090;
  }
  .findpane {
    width: 735px;
    flex: none;
  }
  .frow {
    display: flex;
    height: 32px;
    margin-bottom: 4px;
  }
  .frow.second {
    height: 30px;
  }
  .flabel {
    width: 134px;
    padding-left: 6px;
    line-height: 28px;
    flex: none;
  }
  .second .flabel {
    line-height: 22px;
  }
  .field {
    box-sizing: border-box;
    width: 525px;
    background: #fff;
    box-shadow: inset 2px 2px #222, inset -2px -2px #eee;
    padding: 2px 0 0 4px;
    line-height: 27px;
    margin-right: 6px;
  }
  .field.ro {
    width: 468px;
    background: #bfbfbf;
  }
  .btn {
    box-sizing: border-box;
    background: #bfbfbf;
    box-shadow: inset 2px 2px #f4f4f4, inset -2px -2px #808080, 1px 1px #111, 2px 2px #111;
    text-align: center;
    line-height: 32px;
  }
  .browse { width: 119px; }
  .find { width: 62px; }
  .fhead {
    display: grid;
    grid-template-columns: 104px 104px 209px 103px 140px 75px;
    height: 26px;
    border-bottom: 2px solid #222;
  }
  .fhead > div {
    padding-left: 11px;
    line-height: 28px;
    box-shadow: inset 2px 2px #ececec, inset -2px -2px #808080;
  }
  .flist {
    background: #fff;
    height: 87px;
    padding: 3px 0 0 3px;
    box-sizing: border-box;
    font-size: 18.4px;
  }
  .fitem {
    display: grid;
    grid-template-columns: 107px 105px 208px 105px 132px;
    width: 657px;
    height: 23.4px;
    line-height: 23px;
  }
  .fitem > div {
    padding-left: 4px;
    overflow: hidden;
  }
  .fitem.sel {
    background: #bdbdbd;
  }
  .watch,
  .output {
    flex: none;
    margin-top: 3px;
    height: 180px;
    box-sizing: border-box;
    border-top: 2px solid #222;
    border-left: 2px solid #222;
    display: flex;
    flex-direction: column;
    background: #fff;
    position: relative;
    overflow: hidden;
  }
  .watch {
    width: 346px;
  }
  .output {
    width: 347px;
  }
  .whead {
    display: grid;
    grid-template-columns: 104px 105px 104px 33px;
    height: 27px;
    background: #bfbfbf;
    border-bottom: 2px solid #222;
    flex: none;
    overflow: hidden;
  }
  .whead > div {
    padding-left: 10px;
    line-height: 26px;
    overflow: hidden;
    box-shadow: inset 2px 2px #ececec, inset -2px -2px #808080;
  }
  .wbody {
    flex: 1;
    padding-top: 1px;
    overflow: hidden;
    min-height: 0;
  }
  .witem {
    display: grid;
    grid-template-columns: 104px 105px 104px 33px;
    height: 23.1px;
    line-height: 22px;
    box-sizing: border-box;
    border-bottom: 2px solid #c8c8c8;
  }
  .witem > div {
    padding-left: 6px;
    border-right: 2px solid #c8c8c8;
    overflow: hidden;
  }
  .witem > div:not(:first-child) {
    padding-left: 12px;
  }
  .witem.sel {
    background: #bdbdbd;
    border-color: #bdbdbd;
  }
  .witem.sel > div {
    border-color: #bdbdbd;
  }
  .sheetbar {
    height: 27px;
    flex: none;
    display: flex;
    background: #fff;
    border-bottom: 2px solid #222;
    box-sizing: border-box;
    overflow: hidden;
  }
  .nav {
    display: flex;
    flex: none;
    background: #bfbfbf;
  }
  .navb {
    width: 29.5px;
    display: flex;
    align-items: center;
    justify-content: center;
    gap: 1px;
  }
  .navb.off .arr {
    border-right-color: #808080;
  }
  .navb.off .stop {
    background: #808080;
  }
  .stop {
    width: 2px;
    height: 14px;
    background: #111;
  }
  .tab {
    flex: none;
    padding-left: 16px;
    box-sizing: border-box;
    overflow: hidden;
    line-height: 25px;
    background:
      linear-gradient(-69deg, transparent 48%, #111 48% 53%, transparent 53%) 0 0 / 12px 100% no-repeat,
      #fff;
    border-right: 2px solid #222;
    margin: 0 4px 0 2px;
  }
  .sheetbar .hscroll {
    border-left: 2px solid #222;
  }
  .otext {
    flex: 1;
    min-height: 0;
    padding-left: 5px;
    overflow: hidden;
  }
  .ofirst {
    height: 20px;
    line-height: 17px;
    margin-left: -3px;
    padding-left: 3px;
    border: 2px dotted #333;
    box-sizing: border-box;
  }
  .oline {
    height: 21.7px;
    line-height: 22px;
  }

  /* status bar */
  .status {
    flex: 1;
    display: flex;
    align-items: stretch;
    padding: 5px 0 3px;
    box-sizing: border-box;
    gap: 5px;
    line-height: 25px;
    min-height: 0;
  }
  .shelp {
    width: 455px;
    padding-left: 5px;
    box-sizing: border-box;
    flex: none;
  }
  .cell1 {
    box-sizing: border-box;
    box-shadow: inset 2px 2px #8a8a8a, inset -2px -2px #f0f0f0;
    padding-left: 4px;
    flex: none;
    overflow: hidden;
  }
  .s1 { width: 81px; }
  .s2 { width: 443px; }
  .s3 { width: 94px; }
  .s4 { width: 97px; }
  .s5 { width: 227px; }
  .s6 { width: 117px; }
  .sgrip {
    flex: 1;
    background: repeating-linear-gradient(135deg, transparent 0 3px, #777 3px 5px, #f0f0f0 5px 6px);
    clip-path: polygon(100% 0, 100% 100%, 0 100%);
  }
</style>
